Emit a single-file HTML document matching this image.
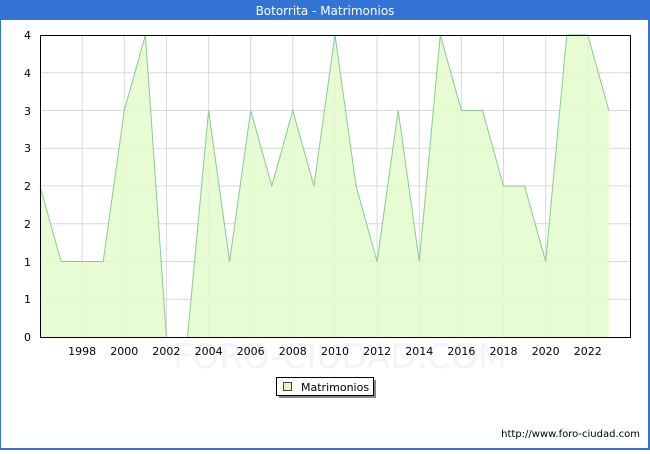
<!DOCTYPE html>
<html><head><style>
body{margin:0;width:650px;height:450px;overflow:hidden;font-family:"DejaVu Sans","Liberation Sans",sans-serif;}
</style></head><body>
<svg width="650" height="450" xmlns="http://www.w3.org/2000/svg" font-family="DejaVu Sans, Liberation Sans, sans-serif">
<rect x="0" y="0" width="650" height="450" fill="#3373d6"/>
<rect x="1" y="20" width="647" height="428" fill="#fff"/>
<text x="325" y="15" fill="#fff" font-size="12" text-anchor="middle">Botorrita - Matrimonios</text>
<g stroke="#d8d8d8" stroke-width="1">
<line x1="40" y1="72.75" x2="630" y2="72.75"/><line x1="40" y1="110.5" x2="630" y2="110.5"/><line x1="40" y1="148.25" x2="630" y2="148.25"/><line x1="40" y1="186" x2="630" y2="186"/><line x1="40" y1="223.75" x2="630" y2="223.75"/><line x1="40" y1="261.5" x2="630" y2="261.5"/><line x1="40" y1="299.25" x2="630" y2="299.25"/>
<line x1="82.1" y1="35" x2="82.1" y2="337"/><line x1="124.3" y1="35" x2="124.3" y2="337"/><line x1="166.4" y1="35" x2="166.4" y2="337"/><line x1="208.6" y1="35" x2="208.6" y2="337"/><line x1="250.7" y1="35" x2="250.7" y2="337"/><line x1="292.8" y1="35" x2="292.8" y2="337"/><line x1="335" y1="35" x2="335" y2="337"/><line x1="377.1" y1="35" x2="377.1" y2="337"/><line x1="419.3" y1="35" x2="419.3" y2="337"/><line x1="461.4" y1="35" x2="461.4" y2="337"/><line x1="503.5" y1="35" x2="503.5" y2="337"/><line x1="545.7" y1="35" x2="545.7" y2="337"/><line x1="587.8" y1="35" x2="587.8" y2="337"/>
</g>
<polygon fill="#e4fccc" fill-opacity="0.85" stroke="none" points="40,337 40,186 61.1,261.5 82.1,261.5 103.2,261.5 124.3,110.5 145.4,35 166.4,337 187.5,337 208.6,110.5 229.6,261.5 250.7,110.5 271.8,186 292.8,110.5 313.9,186 335,35 356.1,186 377.1,261.5 398.2,110.5 419.3,261.5 440.3,35 461.4,110.5 482.5,110.5 503.5,186 524.6,186 545.7,261.5 566.8,35 587.8,35 608.9,110.5 608.9,337"/>
<polyline fill="none" stroke="#88c898" stroke-width="1" points="40,186 61.1,261.5 82.1,261.5 103.2,261.5 124.3,110.5 145.4,35 166.4,337"/>
<polyline fill="none" stroke="#88c898" stroke-width="1" points="187.5,337 208.6,110.5 229.6,261.5 250.7,110.5 271.8,186 292.8,110.5 313.9,186 335,35 356.1,186 377.1,261.5 398.2,110.5 419.3,261.5 440.3,35 461.4,110.5 482.5,110.5 503.5,186 524.6,186 545.7,261.5 566.8,35 587.8,35 608.9,110.5"/>
<text x="340" y="368" font-size="34" fill="#eef0fa" text-anchor="middle" opacity="0.7">FORO-CIUDAD.COM</text>
<rect x="40.5" y="35.5" width="590" height="302" fill="none" stroke="#000" stroke-width="1"/>
<g font-size="11" fill="#000" text-anchor="end">
<text x="31" y="39">4</text><text x="31" y="77">4</text><text x="31" y="115">3</text><text x="31" y="152">3</text><text x="31" y="190">2</text><text x="31" y="228">2</text><text x="31" y="266">1</text><text x="31" y="303">1</text><text x="31" y="341">0</text>
</g>
<g font-size="11" fill="#000" text-anchor="middle">
<text x="82.1" y="355">1998</text><text x="124.3" y="355">2000</text><text x="166.4" y="355">2002</text><text x="208.6" y="355">2004</text><text x="250.7" y="355">2006</text><text x="292.8" y="355">2008</text><text x="335" y="355">2010</text><text x="377.1" y="355">2012</text><text x="419.3" y="355">2014</text><text x="461.4" y="355">2016</text><text x="503.5" y="355">2018</text><text x="545.7" y="355">2020</text><text x="587.8" y="355">2022</text>
</g>
<rect x="279" y="380" width="97" height="18" fill="#888"/>
<rect x="276.5" y="377.5" width="97" height="18" fill="#fff" stroke="#000"/>
<rect x="283.5" y="382.5" width="8" height="8" fill="#ddf8c0" stroke="#444"/>
<text x="301" y="391" font-size="11" fill="#000">Matrimonios</text>
<text x="640" y="437" font-size="10" fill="#000" text-anchor="end">http://www.foro-ciudad.com</text>
</svg>
</body></html>
